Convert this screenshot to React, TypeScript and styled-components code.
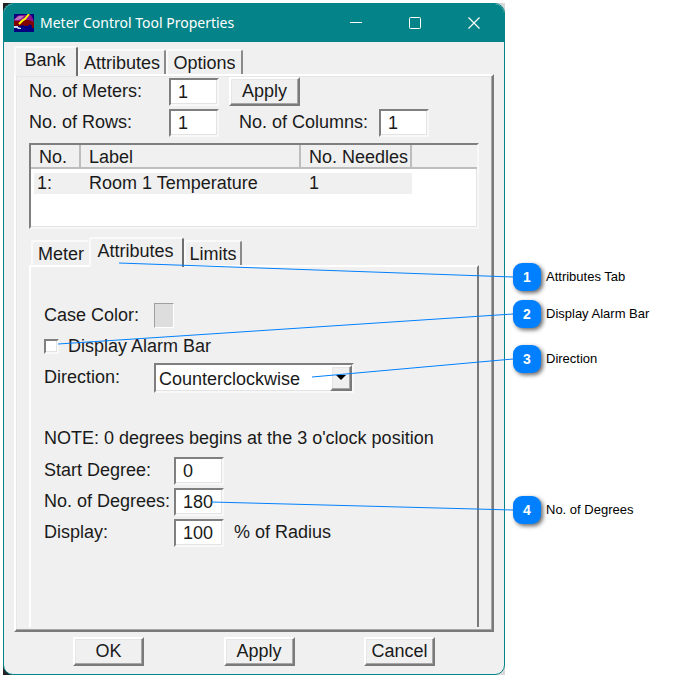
import React from "react";
import styled, { createGlobalStyle, css } from "styled-components";

const face = "#f0f0f0";
const teal = "#048488";
const accent = "#0080ff";

const GlobalStyle = createGlobalStyle`
  * { box-sizing: border-box; }
  body {
    margin: 0;
    background: #ffffff;
    color: #1a1a1a;
    font-family: "Liberation Sans", Arial, sans-serif;
    font-size: 18px;
    line-height: 20px;
  }
  button, input, select { font: inherit; color: inherit; margin: 0; }
`;

const raised = css`
  border: 2px solid;
  border-color: #ffffff #7a7a7a #7a7a7a #ffffff;
  box-shadow: inset -1px -1px 0 #a6a6a6, inset 1px 1px 0 #e6e6e6;
`;

const sunken = css`
  border: 2px solid;
  border-color: #7f7f7f #f8f8f8 #f8f8f8 #7f7f7f;
  box-shadow: inset -1px -1px 0 #e3e3e3;
`;

const Figure = styled.main`
  display: flex;
  padding: 3px 0 3px 3px;
`;

const Stage = styled.div`
  position: relative;
  flex: 1;
  min-width: 480px;
  background: linear-gradient(90deg, #222222 50%, #d8d8d8 50%);
`;

const Dialog = styled.section`
  border: 1px solid ${teal};
  border-radius: 10px;
  background: ${face};
  overflow: hidden;
`;

const TitleBar = styled.header`
  display: flex;
  align-items: center;
  height: 38px;
  padding-left: 10px;
  background: ${teal};
  color: #ffffff;
`;

const Title = styled.h1`
  flex: 1;
  margin: 0 0 0 6px;
  font: 400 14px/20px "Noto Sans", "Open Sans", sans-serif;
`;

const Caption = styled.button`
  display: grid;
  place-items: center;
  width: 59px;
  height: 38px;
  padding: 0 2px 0 0;
  border: 0;
  background: none;
`;

const Body = styled.div`
  padding: 5px 10px 8px;
`;

const TabList = styled.div<{ $inset?: boolean }>`
  display: flex;
  align-items: flex-end;
  height: ${(p) => (p.$inset ? 28 : 27)}px;
  padding-left: ${(p) => (p.$inset ? 2 : 0)}px;
`;

const Tab = styled.button<{ $active?: boolean; $width: number }>`
  width: ${(p) => p.$width}px;
  height: ${(p) => (p.$active ? 30 : 25)}px;
  margin-bottom: ${(p) => (p.$active ? -2 : 0)}px;
  padding: ${(p) => (p.$active ? "0 2px 5px 0" : "0")};
  border: 0;
  border-top: 2px solid #fafafa;
  border-left: 2px solid #fafafa;
  border-right: 2px solid ${(p) => (p.$active ? "#6f6f6f" : "#8a8a8a")};
  border-radius: 3px 3px 0 0;
  background: ${face};
  white-space: nowrap;
  z-index: ${(p) => (p.$active ? 1 : 0)};
  &:has(+ [aria-selected="true"]) { border-right: 0; }
`;

const Panel = styled.div`
  padding: 0 13px 3px;
  ${raised}
`;

const Row = styled.div`
  display: flex;
  align-items: center;
  height: 31px;
`;

const Label = styled.label<{ $width: number; $gap?: number }>`
  width: ${(p) => p.$width}px;
  margin-left: ${(p) => p.$gap ?? 0}px;
  padding-bottom: 2px;
  white-space: nowrap;
`;

const Field = styled.input`
  width: 50px;
  height: 28px;
  padding: 2px 7px 0;
  border-radius: 0;
  background: #ffffff;
  outline: 0;
  ${sunken}
`;

const PushButton = styled.button`
  width: 71px;
  height: 29px;
  padding: 0 0 2px;
  background: ${face};
  ${raised}
`;

const RowButton = styled(PushButton)`
  margin-left: 10px;
`;

const ListBox = styled.div`
  height: 86px;
  margin-top: 5px;
  background: #ffffff;
  ${sunken}
`;

const Meters = styled.table`
  width: 100%;
  table-layout: fixed;
  border-collapse: separate;
  border-spacing: 0;
  text-align: left;
`;

const Head = styled.th`
  height: 24px;
  padding: 2px 0 0 8px;
  border-right: 2px solid #bdbdbd;
  border-bottom: 2px solid #bdbdbd;
  background: ${face};
  font-weight: 400;
  white-space: nowrap;
  &:last-child { border-right: 0; }
`;

const Cell = styled.td`
  height: 25px;
  padding: 0 0 1px 8px;
  border-top: 4px solid #ffffff;
  background: ${face};
  white-space: nowrap;
  &:first-child { border-left: 3px solid #ffffff; padding-left: 3px; }
  &:last-child { background: none; border-top: 0; }
`;

const NestedTabs = styled.div`
  margin-top: 8px;
`;

const NestedPanel = styled.div`
  padding: 33px 12px 79px 13px;
  border: 2px solid;
  border-color: #ffffff #7a7a7a transparent #ffffff;
  border-bottom: 0;
`;

const Swatch = styled.button`
  width: 20px;
  height: 25px;
  padding: 0;
  border: 1px solid;
  border-color: #a0a0a0 #ffffff #ffffff #a0a0a0;
  background: #dddddd;
`;

const Check = styled.input`
  appearance: none;
  width: 15px;
  height: 15px;
  margin: 0 9px 0 0;
  background: #ffffff;
  ${sunken}
  &:checked { background: #1a1a1a; }
`;

const SelectWrap = styled.div`
  display: grid;
  grid-template-columns: 1fr 22px;
  width: 200px;
  height: 30px;
  background: #ffffff;
  ${sunken}
`;

const Select = styled.select`
  grid-area: 1 / 1 / 2 / 3;
  appearance: none;
  width: 100%;
  padding: 2px 3px 0;
  border: 0;
  background: none;
  outline: 0;
`;

const Arrow = styled.span`
  grid-area: 1 / 2;
  display: grid;
  place-items: center;
  background: ${face};
  pointer-events: none;
  ${raised}
`;

const Note = styled.p`
  margin: 35px 0 7px;
  white-space: nowrap;
`;

const Footer = styled.footer`
  display: grid;
  grid-template-columns: 150fr 140fr 71px;
  padding: 5px 59px 0 59px;
`;

const Leaders = styled.svg`
  position: absolute;
  z-index: 2;
  top: 0;
  left: 0;
  width: calc(100% + 8px);
  height: 100%;
  pointer-events: none;
`;

const Callouts = styled.ol`
  position: relative;
  flex: 0 0 183px;
  margin: 0;
  padding: 0;
  list-style: none;
`;

const Callout = styled.li<{ $top: number }>`
  position: absolute;
  z-index: 3;
  top: ${(p) => p.$top}px;
  left: 8px;
  display: flex;
  align-items: center;
  gap: 5px;
  color: #000000;
  font-size: 13px;
  white-space: nowrap;
`;

const Badge = styled.b`
  width: 28px;
  height: 28px;
  border-radius: 9px;
  background: ${accent};
  box-shadow: 2px 2px 4px rgba(0, 0, 0, 0.6);
  color: #ffffff;
  font-size: 14px;
  line-height: 28px;
  text-align: center;
`;

const callouts = [
  { text: "Attributes Tab", x: 116, y: 260, end: 274 },
  { text: "Display Alarm Bar", x: 55, y: 341, end: 311 },
  { text: "Direction", x: 309, y: 374, end: 356 },
  { text: "No. of Degrees", x: 208, y: 499, end: 507 },
];

function AppIcon() {
  return (
    <svg width="20" height="18" viewBox="0 0 20 18" aria-hidden="true">
      <path d="M0 0h20v18H0z" fill="#000080" />
      <path d="M3 2l3-1h11l2 4 1 4H0V6z" fill="#8c1488" />
      <path d="M0 7h6l4-1h5l5 2v6h-2v-2l-2-2-2 2h-3l-2-1-3 1H0z" fill="#800000" />
      <path d="M0 6l5-4h5L7 5 4 6z" fill="#b878c0" />
      <path d="M0 12h4v1l3 1v1H4l-1-1H0z" fill="#c8d8f0" />
      <path d="M5 10l4-4 2-1 4-5" fill="none" stroke="#ffff00" strokeWidth="2" />
    </svg>
  );
}

export default function App() {
  return (
    <>
      <GlobalStyle />
      <Figure>
        <Stage>
          <Dialog aria-label="Meter Control Tool Properties">
            <TitleBar>
              <AppIcon />
              <Title>Meter Control Tool Properties</Title>
              <Caption aria-label="Minimize">
                <svg width="12" height="12"><path d="M0 5.500h12" stroke="#fff" /></svg>
              </Caption>
              <Caption aria-label="Maximize">
                <svg width="12" height="12"><rect x=".5" y=".5" width="11" height="11" rx="1" fill="none" stroke="#fff" /></svg>
              </Caption>
              <Caption aria-label="Close">
                <svg width="12" height="12"><path d="M.5.500l11 11m0-11l-11 11" stroke="#fff" strokeWidth="1.200" /></svg>
              </Caption>
            </TitleBar>

            <Body>
              <TabList role="tablist">
                <Tab role="tab" aria-selected $active $width={64}>Bank</Tab>
                <Tab role="tab" $width={88}>Attributes</Tab>
                <Tab role="tab" $width={77}>Options</Tab>
              </TabList>
              <Panel>
                <Row>
                  <Label htmlFor="meters" $width={140}>No. of Meters:</Label>
                  <Field id="meters" defaultValue="1" />
                  <RowButton>Apply</RowButton>
                </Row>
                <Row>
                  <Label htmlFor="rows" $width={140}>No. of Rows:</Label>
                  <Field id="rows" defaultValue="1" />
                  <Label htmlFor="columns" $width={140} $gap={20}>No. of Columns:</Label>
                  <Field id="columns" defaultValue="1" />
                </Row>

                <ListBox>
                  <Meters>
                    <colgroup>
                      <col width="50" />
                      <col width="220" />
                      <col width="111" />
                      <col />
                    </colgroup>
                    <thead>
                      <tr>
                        <Head>No.</Head>
                        <Head>Label</Head>
                        <Head>No. Needles</Head>
                        <Head />
                      </tr>
                    </thead>
                    <tbody>
                      <tr>
                        <Cell>1:</Cell>
                        <Cell>Room 1 Temperature</Cell>
                        <Cell>1</Cell>
                        <Cell />
                      </tr>
                    </tbody>
                  </Meters>
                </ListBox>

                <NestedTabs>
                  <TabList role="tablist" $inset>
                    <Tab role="tab" $width={58}>Meter</Tab>
                    <Tab role="tab" aria-selected $active $width={95}>Attributes</Tab>
                    <Tab role="tab" $width={58}>Limits</Tab>
                  </TabList>
                  <NestedPanel>
                    <Row>
                      <Label htmlFor="case" $width={110}>Case Color:</Label>
                      <Swatch id="case" />
                    </Row>
                    <Row>
                      <Check type="checkbox" id="alarm" />
                      <Label htmlFor="alarm" $width={140}>Display Alarm Bar</Label>
                    </Row>
                    <Row>
                      <Label htmlFor="direction" $width={110}>Direction:</Label>
                      <SelectWrap>
                        <Select id="direction" defaultValue="ccw">
                          <option value="ccw">Counterclockwise</option>
                          <option value="cw">Clockwise</option>
                        </Select>
                        <Arrow>
                          <svg width="10" height="6"><path d="M0 0h10L5 5z" /></svg>
                        </Arrow>
                      </SelectWrap>
                    </Row>
                    <Note>NOTE: 0 degrees begins at the 3 o'clock position</Note>
                    <Row>
                      <Label htmlFor="start" $width={130}>Start Degree:</Label>
                      <Field id="start" defaultValue="0" />
                    </Row>
                    <Row>
                      <Label htmlFor="degrees" $width={130}>No. of Degrees:</Label>
                      <Field id="degrees" defaultValue="180" />
                    </Row>
                    <Row>
                      <Label htmlFor="radius" $width={130}>Display:</Label>
                      <Field id="radius" defaultValue="100" />
                      <Label htmlFor="radius" $width={110} $gap={10}>% of Radius</Label>
                    </Row>
                  </NestedPanel>
                </NestedTabs>
              </Panel>
              <Footer>
                <PushButton>OK</PushButton>
                <PushButton>Apply</PushButton>
                <PushButton>Cancel</PushButton>
              </Footer>
            </Body>
          </Dialog>
          <Leaders aria-hidden="true">
            {callouts.map((c) => (
              <line key={c.text} x1={c.x} y1={c.y} x2="100%" y2={c.end} stroke={accent} />
            ))}
          </Leaders>
        </Stage>
        <Callouts>
          {callouts.map((c, i) => (
            <Callout key={c.text} $top={c.end - 14}>
              <Badge>{i + 1}</Badge>
              {c.text}
            </Callout>
          ))}
        </Callouts>
      </Figure>
    </>
  );
}
